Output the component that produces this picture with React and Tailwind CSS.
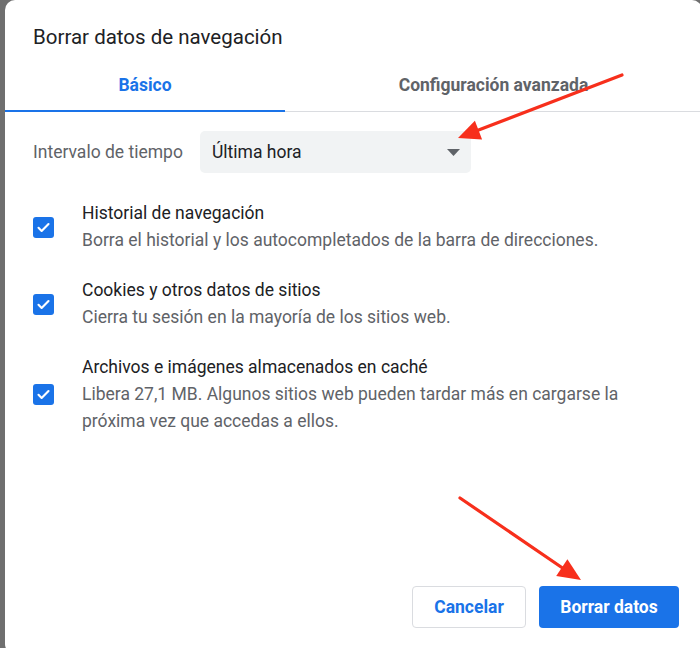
import React from 'react';

const items = [
  {
    title: 'Historial de navegación',
    desc: 'Borra el historial y los autocompletados de la barra de direcciones.',
  },
  {
    title: 'Cookies y otros datos de sitios',
    desc: 'Cierra tu sesión en la mayoría de los sitios web.',
  },
  {
    title: 'Archivos e imágenes almacenados en caché',
    desc: 'Libera 27,1 MB. Algunos sitios web pueden tardar más en cargarse la próxima vez que accedas a ellos.',
  },
];

function Checkbox() {
  return (
    <div className="w-[21px] h-[21px] shrink-0 rounded-[3px] bg-[#1a73e8] flex items-center justify-center">
      <svg width="15" height="15" viewBox="0 0 24 24" fill="none">
        <path d="M4 12.5l5 5L20 6.5" stroke="white" strokeWidth="3.4" strokeLinecap="round" strokeLinejoin="round" />
      </svg>
    </div>
  );
}

export default function App() {
  return (
    <div className="relative w-[700px] h-[648px] overflow-hidden bg-[#6f6f6f] pl-[5px] font-['Roboto',sans-serif]">
      <div className="w-[697px] h-[654px] bg-white rounded-[10px] flex flex-col">
        {/* titulo */}
        <div className="pt-[24px] px-[28px] text-[20.5px] leading-[26px] text-[#202124]">
          Borrar datos de navegación
        </div>

        {/* pestañas */}
        <div className="mt-[9px] flex border-b border-[#dadce0]">
          <div className="w-[280px] h-[52px] relative flex items-center justify-center text-[17.5px] font-bold text-[#1a73e8]">
            Básico
            <div className="absolute left-0 right-0 -bottom-px h-[2px] bg-[#1a73e8]" />
          </div>
          <div className="flex-1 h-[52px] flex items-center justify-center text-[17.5px] font-bold text-[#5f6368]">
            Configuración avanzada
          </div>
        </div>

        {/* intervalo */}
        <div className="mt-[19px] px-[28px] flex items-center">
          <div className="w-[167px] text-[17.5px] text-[#5f6368]">Intervalo de tiempo</div>
          <div className="w-[271px] h-[42px] rounded-[5px] bg-[#f1f3f4] flex items-center justify-between pl-[12px] pr-[11px]">
            <span className="text-[17.5px] text-[#202124]">Última hora</span>
            <svg width="13" height="7" viewBox="0 0 13 7">
              <path d="M0 0h13L6.5 7z" fill="#5f6368" />
            </svg>
          </div>
        </div>

        {/* opciones */}
        <div className="mt-[27px] flex flex-col gap-[23px]">
          {items.map((it) => (
            <div key={it.title} className="flex items-center px-[28px]">
              <Checkbox />
              <div className="ml-[28px] w-[590px] text-[17.5px] leading-[27px]">
                <div className="text-[#202124]">{it.title}</div>
                <div className="text-[#5f6368]">{it.desc}</div>
              </div>
            </div>
          ))}
        </div>

        {/* botones */}
        <div className="mt-auto pb-[26px] pr-[23px] flex justify-end gap-[13px]">
          <button className="w-[114px] h-[42px] rounded-[4px] border border-[#dadce0] bg-white text-[17.5px] font-bold text-[#1a73e8]">
            Cancelar
          </button>
          <button className="w-[140px] h-[42px] rounded-[4px] bg-[#1a73e8] text-[17.5px] font-bold text-white">
            Borrar datos
          </button>
        </div>
      </div>

      {/* flechas */}
      <svg className="absolute inset-0 pointer-events-none" width="700" height="648">
        <line x1="622" y1="75" x2="476" y2="131" stroke="#f72f1c" strokeWidth="3.2" strokeLinecap="round" />
        <polygon points="458,138 474.9,120.8 482.1,139.4" fill="#f72f1c" />
        <line x1="460" y1="498" x2="564" y2="569" stroke="#f72f1c" strokeWidth="3.2" strokeLinecap="round" />
        <polygon points="581,580 556.2,575.9 567.4,559.3" fill="#f72f1c" />
      </svg>
    </div>
  );
}
